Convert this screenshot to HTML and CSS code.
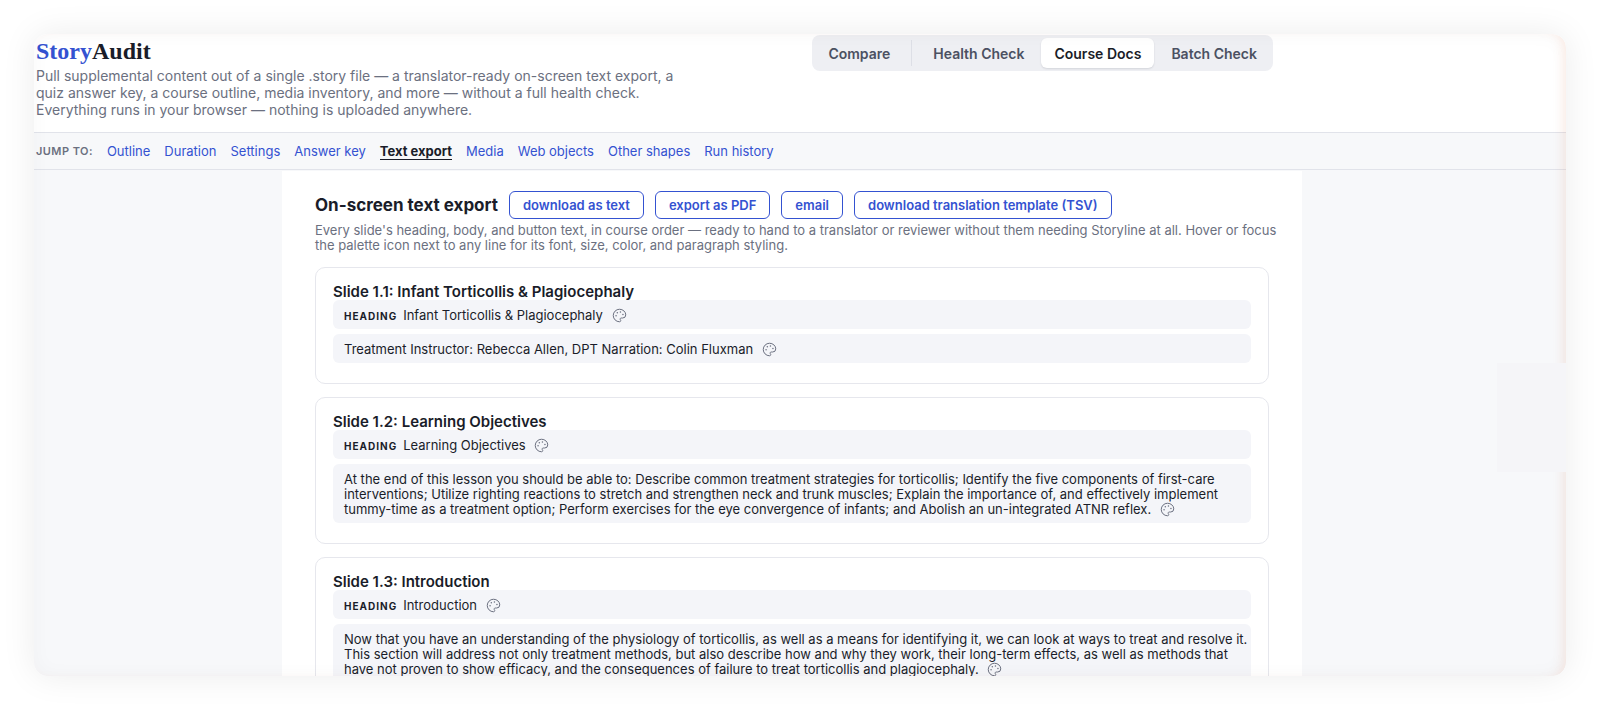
FILE: index.html
```
<!DOCTYPE html>
<html lang="en">
<head>
  <meta charset="UTF-8" />
  <meta name="viewport" content="width=device-width, initial-scale=1.0"/>
  <title>Course Docs | StoryAudit</title>
  <link rel="stylesheet" href="styles.css">
</head>
<body>
  <svg class="sprite" aria-hidden="true">
    <symbol id="palette" viewBox="0 0 24 24">
      <path d="M12 22a1 1 0 0 1 0-20 10 9 0 0 1 10 9 5 5 0 0 1-5 5h-2.25a1.75 1.75 0 0 0-1.4 2.8l.3.4a1.75 1.75 0 0 1-1.4 2.8z" fill="none" stroke="currentColor" stroke-width="1.6" stroke-linejoin="round"/>
      <g fill="currentColor">
        <circle cx="13.5" cy="6.5" r="1.2"/>
        <circle cx="17.5" cy="10.5" r="1.2"/>
        <circle cx="6.5" cy="12.5" r="1.2"/>
        <circle cx="8.5" cy="7.5" r="1.2"/>
      </g>
    </symbol>
  </svg>

  <div class="frame">
    <header class="site-header">
      <div class="header-inner">
        <div class="brand">
          <h1><span>Story</span>Audit</h1>
          <p>Pull supplemental content out of a single .story file — a translator-ready on-screen text export, a quiz answer key, a course outline, media inventory, and more — without a full health check. Everything runs in your browser — nothing is uploaded anywhere.</p>
        </div>
        <nav class="tabs" aria-label="Tools">
          <button type="button">Compare</button>
          <span class="tab-divider"></span>
          <button type="button">Health Check</button>
          <button type="button" class="active">Course Docs</button>
          <button type="button">Batch Check</button>
        </nav>
      </div>
    </header>

    <nav class="jump-nav" aria-label="Jump to">
      <span class="jump-label">JUMP TO:</span>
      <a href="#outline">Outline</a>
      <a href="#duration">Duration</a>
      <a href="#settings">Settings</a>
      <a href="#answer-key">Answer key</a>
      <a href="#text-export" class="current">Text export</a>
      <a href="#media">Media</a>
      <a href="#web-objects">Web objects</a>
      <a href="#other-shapes">Other shapes</a>
      <a href="#run-history">Run history</a>
    </nav>

    <div class="content">
      <main id="text-export">
        <div class="section-head">
          <h2>On-screen text export</h2>
          <button type="button" class="btn">download as text</button>
          <button type="button" class="btn">export as PDF</button>
          <button type="button" class="btn">email</button>
          <button type="button" class="btn">download translation template (TSV)</button>
        </div>
        <p class="section-desc">Every slide's heading, body, and button text, in course order — ready to hand to a translator or reviewer without them needing Storyline at all. Hover or focus the palette icon next to any line for its font, size, color, and paragraph styling.</p>

        <article class="slide">
          <h3>Slide 1.1: Infant Torticollis &amp; Plagiocephaly</h3>
          <div class="line"><span class="tag">HEADING</span>Infant Torticollis &amp; Plagiocephaly <button type="button" class="style-btn" aria-label="Text styling"><svg><use href="#palette"/></svg></button></div>
          <div class="line">Treatment Instructor: Rebecca Allen, DPT Narration: Colin Fluxman <button type="button" class="style-btn" aria-label="Text styling"><svg><use href="#palette"/></svg></button></div>
        </article>

        <article class="slide">
          <h3>Slide 1.2: Learning Objectives</h3>
          <div class="line"><span class="tag">HEADING</span>Learning Objectives <button type="button" class="style-btn" aria-label="Text styling"><svg><use href="#palette"/></svg></button></div>
          <div class="line">At the end of this lesson you should be able to: Describe common treatment strategies for torticollis; Identify the five components of first-care interventions; Utilize righting reactions to stretch and strengthen neck and trunk muscles; Explain the importance of, and effectively implement tummy-time as a treatment option; Perform exercises for the eye convergence of infants; and Abolish an un-integrated ATNR reflex. <button type="button" class="style-btn" aria-label="Text styling"><svg><use href="#palette"/></svg></button></div>
        </article>

        <article class="slide">
          <h3>Slide 1.3: Introduction</h3>
          <div class="line"><span class="tag">HEADING</span>Introduction <button type="button" class="style-btn" aria-label="Text styling"><svg><use href="#palette"/></svg></button></div>
          <div class="line">Now that you have an understanding of the physiology of torticollis, as well as a means for identifying it, we can look at ways to treat and resolve it. This section will address not only treatment methods, but also describe how and why they work, their long-term effects, as well as methods that have not proven to show efficacy, and the consequences of failure to treat torticollis and plagiocephaly. <button type="button" class="style-btn" aria-label="Text styling"><svg><use href="#palette"/></svg></button></div>
        </article>
      </main>
    </div>
    <div class="side-panel"></div>
  </div>
</body>
</html>
```
FILE: styles.css
```
* {
  box-sizing: border-box;
}
body {
  margin: 0;
  padding: 34px;
  height: 100vh;
  background: #fff;
  font-family: Inter, "Liberation Sans", sans-serif;
  font-size: 13px;
  color: #1a1d29;
}
h1, h2, h3, p {
  margin: 0;
}
button {
  font-family: inherit;
  cursor: pointer;
}
.sprite {
  position: absolute;
  width: 0;
  height: 0;
}
.frame {
  position: relative;
  height: 100%;
  overflow: hidden;
  background: #f7f8fa;
  border-radius: 14px;
  box-shadow: 0 0 34px rgba(0, 0, 0, 0.08);
}
/* soft glow along the inside edge */
.frame::after {
  content: "";
  position: absolute;
  inset: 0;
  border-radius: 14px;
  box-shadow: inset -8px 0 12px -6px rgba(240, 140, 100, 0.16), inset 0 0 20px rgba(60, 30, 20, 0.03);
  pointer-events: none;
}

/* header */
.site-header {
  background: #fff;
  border-bottom: 1px solid #e1e3ea;
  padding: 1px 2px 14px;
}
.header-inner {
  display: flex;
  justify-content: space-between;
  align-items: flex-start;
  max-width: 1237px;
}
.brand {
  max-width: 640px;
}
.brand h1 {
  font-family: "Liberation Serif", serif;
  font-size: 24px;
  line-height: 32px;
  font-weight: 700;
}
.brand h1 span {
  color: #3452d1;
}
.brand p {
  font-size: 14px;
  line-height: 17px;
  color: #6b7080;
}
.tabs {
  display: flex;
  gap: 4px;
  padding: 3px;
  background: #eeeff3;
  border-radius: 8px;
}
.tabs button {
  height: 30px;
  padding: 0 13px;
  border: none;
  border-radius: 6px;
  background: none;
  font-size: 14px;
  font-weight: 600;
  color: #4b5162;
  white-space: nowrap;
}
.tabs button.active {
  background: #fff;
  color: #1a1d29;
  box-shadow: 0 1px 2px rgba(20, 25, 40, 0.12);
}
.tab-divider {
  width: 1px;
  margin: 2px 4px;
  background: #dddfe6;
}

/* jump links */
.jump-nav {
  display: flex;
  align-items: center;
  gap: 14px;
  height: 37px;
  padding: 0 2px;
  border-bottom: 1px solid #e1e3ea;
}
.jump-label {
  font-size: 11px;
  font-weight: 600;
  letter-spacing: 0.04em;
  color: #6b7080;
}
.jump-nav a {
  color: #3452d1;
  text-decoration: none;
  line-height: 16px;
  border-bottom: 1px solid transparent;
}
.jump-nav a.current {
  color: #1a1d29;
  font-weight: 700;
  border-bottom-color: #1a1d29;
}

.content {
  padding: 1px 16px 0 0;
}
main {
  max-width: 1020px;
  margin: 0 auto;
  padding: 20px 33px 33px;
  background: #fff;
}
.section-head {
  display: flex;
  align-items: center;
  gap: 11px;
}
.section-head h2 {
  font-size: 17px;
  font-weight: 700;
}
.btn {
  height: 28px;
  padding: 0 13px;
  border: 1px solid #3452d1;
  border-radius: 6px;
  background: #fff;
  color: #3452d1;
  font-size: 13px;
  font-weight: 600;
}
.section-desc {
  margin: 4px -12px 14px 0;
  line-height: 15px;
  color: #6b7080;
}
.slide {
  margin-bottom: 13px;
  padding: 16px 17px 20px;
  border: 1px solid #e6e7ed;
  border-radius: 10px;
}
.slide h3 {
  font-size: 15px;
  line-height: 16px;
  font-weight: 600;
}
.line {
  padding: 8px 3px 6px 11px;
  background: #f4f5f9;
  border-radius: 6px;
  line-height: 15px;
}
.line + .line {
  margin-top: 5px;
}
.tag {
  margin-right: 6px;
  font-size: 10px;
  line-height: 1;
  font-weight: 700;
  letter-spacing: 1px;
}
.style-btn {
  height: 15px;
  margin-left: 5px;
  padding: 0;
  border: none;
  background: none;
  color: #6b7080;
  vertical-align: top;
}
.style-btn svg {
  display: block;
  width: 15px;
  height: 15px;
}
.side-panel {
  position: absolute;
  top: 329px;
  right: 0;
  z-index: 1;
  width: 69px;
  height: 109px;
  background: #f5f5f8;
}
```
